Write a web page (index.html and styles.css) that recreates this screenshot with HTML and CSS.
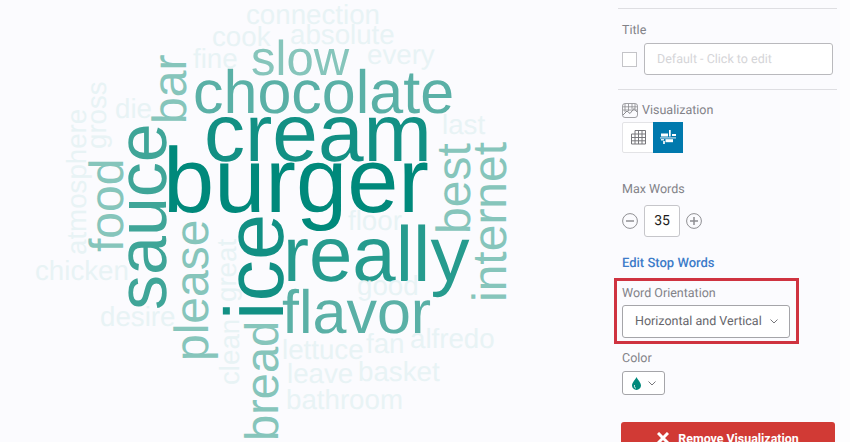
FILE: index.html
```html
<!DOCTYPE html>
<html lang="en">
<head>
<meta charset="utf-8">
<title>Word cloud</title>
<link rel="stylesheet" href="styles.css">
</head>
<body>
<div class="page">
  <main class="cloud">
    <span class="w t0 burger">burger</span>
    <span class="w t1 cream">cream</span>
    <span class="w t3 chocolate">chocolate</span>
    <span class="w t4 slow">slow</span>
    <span class="w t2 really">really</span>
    <span class="w t3 flavor">flavor</span>
    <span class="w v t1 ice">ice</span>
    <span class="w v t2b sauce">sauce</span>
    <span class="w v t4 bread">bread</span>
    <span class="w v t4 please">please</span>
    <span class="w v t4 best">best</span>
    <span class="w v t4 internet">internet</span>
    <span class="w v t4 food">food</span>
    <span class="w v t4 bar">bar</span>
    <span class="w s connection">connection</span>
    <span class="w s cook">cook</span>
    <span class="w s absolute">absolute</span>
    <span class="w s fine">fine</span>
    <span class="w s every">every</span>
    <span class="w s die">die</span>
    <span class="w s last">last</span>
    <span class="w s floor">floor</span>
    <span class="w s good">good</span>
    <span class="w s chicken">chicken</span>
    <span class="w s desire">desire</span>
    <span class="w s lettuce">lettuce</span>
    <span class="w s fan">fan</span>
    <span class="w s alfredo">alfredo</span>
    <span class="w s leave">leave</span>
    <span class="w s basket">basket</span>
    <span class="w s bathroom">bathroom</span>
    <span class="w v s gross">gross</span>
    <span class="w v s atmosphere">atmosphere</span>
    <span class="w v s great">great</span>
    <span class="w v s clean">clean</span>
  </main>
  <aside class="panel">
    <section class="sec sec-title">
      <div class="lab">Title</div>
      <div class="title-row">
        <span class="check"></span>
        <div class="title-input">Default - Click to edit</div>
      </div>
    </section>
    <section class="sec sec-viz">
      <div class="lab lab-icon">
        <svg class="viz-ico" viewBox="0 0 16 15" width="16" height="15" fill="none" stroke="#8a8a8e" stroke-width=".8"><rect x=".5" y=".5" width="15" height="14" rx="2.5"/><path d="M3 1v8M6.500 1v7M10 1v5M13 1v5M1 3.800h14M1 7h14"/><path d="M1 12l4-4 3 2.500 4-5 3 3.500" stroke-width="1"/></svg>
        Visualization
      </div>
      <div class="toggle">
        <span class="tog">
          <svg viewBox="0 0 15 15" width="15" height="15" fill="none" stroke="#77777b"><path d="M4 .5h10.500v13.500H.5V4H14.500M.5 7.500h14M.5 10.800h14M4 .5V14M7.500.5V14M11 .5V14"/></svg>
        </span>
        <span class="tog tog-on">
          <svg viewBox="0 0 16 15" width="16" height="15"><path d="M1 3.500h7v3H1zM9 0h1.700v6.500H9zM12 4h4v2h-4z" fill="#fff"/><path d="M0 7.300h16v1.200H0z" fill="#bcd9e8"/><path d="M1 9h3v1.500H1zM3 11h2v3H3z" fill="#d7e8f1"/><path d="M5.500 9.200H13v3H5.500z" fill="#fff"/></svg>
        </span>
      </div>
    </section>
    <section class="sec sec-max">
      <div class="lab">Max Words</div>
      <div class="stepper">
        <svg class="circ" viewBox="0 0 16 16" width="16" height="16" fill="none" stroke="#8f8f93"><circle cx="8" cy="8" r="7.400"/><path d="M4 8h8" stroke-width="1.500"/></svg>
        <div class="num">35</div>
        <svg class="circ" viewBox="0 0 16 16" width="16" height="16" fill="none" stroke="#8f8f93"><circle cx="8" cy="8" r="7.400"/><path d="M4 8h8M8 4v8" stroke-width="1.500"/></svg>
      </div>
      <a class="edit">Edit Stop Words</a>
    </section>
    <section class="highlight">
      <div class="lab">Word Orientation</div>
      <div class="select">
        <span>Horizontal and Vertical</span>
        <svg viewBox="0 0 8 5" width="8" height="5" fill="none" stroke="#77777b"><path d="M.5.500 4 4 7.500.500"/></svg>
      </div>
    </section>
    <section class="sec-color">
      <div class="lab">Color</div>
      <div class="color-select">
        <svg viewBox="0 0 9 13" width="9" height="13"><path d="M4.500 0C3.500 2.500 0 5.500 0 8.600 0 11 2 13 4.500 13S9 11 9 8.600C9 5.500 5.500 2.500 4.500 0z" fill="#00897b"/><path d="M2.500 8c-.4 1.800.4 3 1.500 3.400" fill="none" stroke="#fff" stroke-width=".8"/></svg>
        <svg viewBox="0 0 8 5" width="8" height="5" fill="none" stroke="#77777b"><path d="M.5.500 4 4 7.500.500"/></svg>
      </div>
    </section>
    <button class="remove">
      <svg viewBox="0 0 12 12" width="12" height="12" stroke="#fff" stroke-width="3"><path d="M1 1l10 10M11 1 1 11"/></svg>
      Remove Visualization
    </button>
  </aside>
  <div class="gutter"></div>
</div>
</body>
</html>
```
FILE: styles.css
```css
* { box-sizing: border-box; }
html, body { margin: 0; padding: 0; }
body { background: #fbfbfe; overflow: hidden; }
.page { width: 850px; height: 442px; display: flex; overflow: hidden; font-family: Roboto, "Liberation Sans", sans-serif; text-rendering: geometricPrecision; }

.cloud { position: relative; flex: 0 0 618px; height: 442px; font-family: "Liberation Sans", Arial, sans-serif; }
.w { position: absolute; line-height: 1; white-space: nowrap; }
.v { transform: rotate(-90deg); transform-origin: 0 0; }
.s { font-size: 27.7px; color: #e8f3f5; }
.t0 { color: #00897b; }
.t1 { color: #129084; }
.t2 { color: #269b8e; }
.t2b { color: #3fa598; }
.t3 { color: #5ab0a6; }
.t4 { color: #86c5bb; }

.burger { font-size: 92px; left: 163px; top: 135px; }
.cream { font-size: 82px; left: 204px; top: 93px; }
.chocolate { font-size: 61px; left: 193px; top: 62px; }
.slow { font-size: 49px; left: 251px; top: 35px; }
.really { font-size: 78px; left: 283px; top: 215px; }
.flavor { font-size: 61px; left: 282px; top: 282px; }
.ice { font-size: 83px; left: 213px; top: 320px; }
.sauce { font-size: 70px; left: 107px; top: 310px; }
.bread { font-size: 47px; left: 238px; top: 441px; }
.please { font-size: 48px; left: 169px; top: 361px; }
.best { font-size: 48px; left: 431px; top: 234px; }
.internet { font-size: 48px; left: 467px; top: 302px; }
.food { font-size: 48px; left: 84px; top: 252px; }
.bar { font-size: 48px; left: 147px; top: 124px; }
.connection { left: 246px; top: 1px; }
.cook { left: 212px; top: 23px; }
.absolute { left: 290px; top: 21px; }
.fine { left: 193px; top: 45px; }
.every { left: 367px; top: 41px; }
.die { left: 115px; top: 95px; }
.last { left: 442px; top: 111px; }
.floor { left: 348px; top: 207px; }
.good { left: 357px; top: 272px; }
.chicken { left: 35px; top: 257px; }
.desire { left: 100px; top: 303px; }
.lettuce { left: 282px; top: 336px; }
.fan { left: 366px; top: 330px; }
.alfredo { left: 410px; top: 325px; }
.leave { left: 287px; top: 360px; }
.basket { left: 358px; top: 358px; }
.bathroom { left: 286px; top: 386px; }
.gross { left: 83px; top: 149px; }
.atmosphere { left: 63px; top: 255px; }
.great { left: 213px; top: 302px; }
.clean { left: 216px; top: 385px; }

.panel { flex: 0 0 222px; height: 442px; padding-top: 8px; display: flex; flex-direction: column; }
.panel > * { flex: none; }
.gutter { flex: 1; background: #fdfdfe; }
.lab { font-size: 12.5px; line-height: 16px; color: #828288; padding-top: 1px; }
.sec { padding-left: 4px; }
.sec-title { width: 219px; border-top: 1px solid #dedee2; border-bottom: 1px solid #dedee2; height: 82px; padding-top: 13px; }
.title-row { display: flex; align-items: center; gap: 7px; margin-top: 4px; }
.check { width: 15px; height: 15px; background: #fff; border: 1px solid #c4c4c8; }
.title-input { width: 189px; height: 32px; background: #fff; border: 1px solid #b9b9bd; border-radius: 3px; padding-left: 12px; font-size: 12.5px; line-height: 32px; color: #d5d5d8; }

.sec-viz { padding-top: 12px; height: 87px; }
.lab-icon { display: flex; align-items: center; gap: 4px; height: 17px; padding-top: 0; }
.toggle { display: flex; width: 61px; height: 31px; margin-top: 3px; border: 1px solid #e3e3e6; border-radius: 2px; background: #fff; }
.tog { flex: 0 0 30px; display: flex; align-items: center; justify-content: center; }
.tog-on { background: #0079ad; margin: -1px -1px -1px 0; }

.sec-max { height: 101px; padding-top: 4px; }
.stepper { display: flex; align-items: center; gap: 6px; margin-top: 7px; }
.num { width: 36px; height: 32px; background: #fff; border: 1px solid #c6c6ca; border-radius: 3px; text-align: center; font-size: 14px; line-height: 30px; color: #1d1d20; }
.circ { flex: none; }
.edit { display: block; margin-top: 18px; font-size: 13px; line-height: 18px; font-weight: 500; color: #3d7cc9; }

.highlight { width: 185px; height: 66px; margin-left: -4px; border: 3px solid #cf3340; padding: 4px 0 0 5px; }
.select { width: 168px; height: 33px; margin-top: 3px; background: #fff; border: 1px solid #a5a5a9; border-radius: 3px; display: flex; align-items: center; justify-content: space-between; padding: 0 11px 0 12px; font-size: 12.5px; color: #66666b; }

.sec-color { padding: 6px 0 0 4px; }
.color-select { width: 43px; height: 24px; margin-top: 4px; background: #fff; border: 1px solid #a5a5a9; border-radius: 3px; display: flex; align-items: center; justify-content: space-between; padding: 0 8px 0 9px; }

.remove { width: 214px; height: 40px; margin: 27px 0 0 3px; padding: 0 0 8px; background: #d13a35; border: 0; border-radius: 3px 3px 0 0; color: #fff; font-family: inherit; font-size: 12.4px; font-weight: 700; display: flex; align-items: center; justify-content: center; gap: 9px; }
```
